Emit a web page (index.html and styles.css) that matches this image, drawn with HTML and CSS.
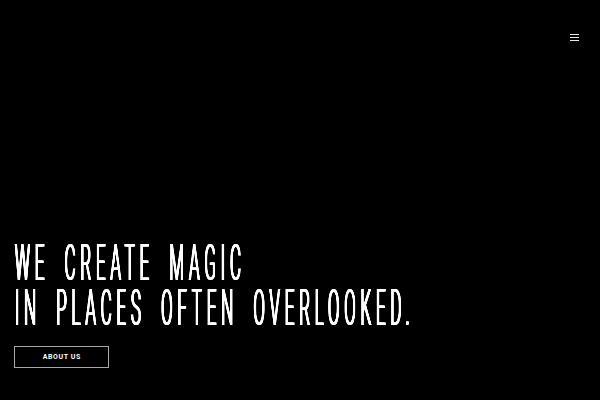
FILE: index.html
```html
<!DOCTYPE html>
<html lang="en">
<head>
<meta charset="utf-8">
<title>We create magic</title>
<link rel="stylesheet" href="styles.css">
</head>
<body>
<div class="page">
  <header class="topbar">
    <button class="menu" aria-label="Menu"><span></span><span></span><span></span></button>
  </header>
  <main class="hero">
    <h1 class="headline"><span class="line">WE CREATE MAGIC</span><span class="line">IN PLACES OFTEN OVERLOOKED.</span></h1>
    <a class="cta" href="#">ABOUT US</a>
  </main>
</div>
</body>
</html>
```
FILE: styles.css
```css
html, body {
  margin: 0;
  padding: 0;
  background: #000;
}
.page {
  height: 100vh;
  display: flex;
  flex-direction: column;
  box-sizing: border-box;
  overflow: hidden;
}
.topbar {
  display: flex;
  justify-content: flex-end;
  padding: 34px 21px 0 0;
}
.menu {
  display: flex;
  flex-direction: column;
  gap: 2px;
  padding: 0;
  margin: 0;
  border: 0;
  background: none;
  cursor: pointer;
}
.menu span {
  display: block;
  width: 9px;
  height: 1px;
  background: #e6e6e6;
}
.hero {
  flex: 1;
  display: flex;
  flex-direction: column;
  justify-content: flex-end;
  align-items: flex-start;
  padding: 0 0 32px 14px;
}
.headline {
  margin: 0 0 15px 0;
  font-family: Roboto, "Liberation Sans", sans-serif;
  font-weight: 300;
  font-size: 50px;
  line-height: 45px;
  letter-spacing: 14px;
  word-spacing: 19px;
  color: #fff;
  text-shadow: 2.2px 0 0 #fff, 4.4px 0 0 #fff;
  white-space: nowrap;
  transform: scaleX(0.34);
  transform-origin: left top;
  will-change: transform;
}
.line {
  display: block;
}
.cta {
  display: flex;
  align-items: center;
  justify-content: center;
  box-sizing: border-box;
  width: 95px;
  height: 22px;
  border: 1px solid #a8a8a8;
  color: #fff;
  text-decoration: none;
  font-family: Roboto, "Liberation Sans", sans-serif;
  font-weight: 700;
  font-size: 7px;
  letter-spacing: 0.6px;
  padding-left: 0.6px;
}
```
